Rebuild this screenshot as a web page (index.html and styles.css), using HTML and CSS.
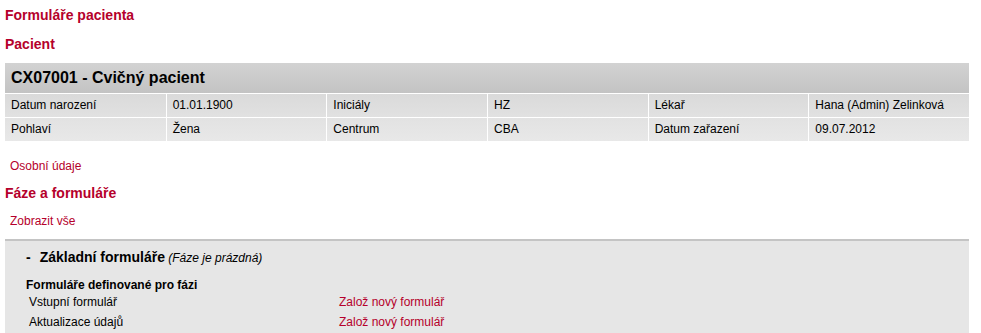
FILE: index.html
```html
<!DOCTYPE html>
<html lang="cs">
<head>
<meta charset="utf-8">
<title>Formuláře pacienta</title>
<link rel="stylesheet" href="styles.css">
</head>
<body>
<div class="page">
  <h1 class="heading h-top">Formuláře pacienta</h1>
  <h2 class="heading h-patient">Pacient</h2>
  <div class="patient">
    <div class="patient-title">CX07001 - Cvičný pacient</div>
    <div class="patient-row row-a">
      <div class="cell">Datum narození</div>
      <div class="cell">01.01.1900</div>
      <div class="cell">Iniciály</div>
      <div class="cell">HZ</div>
      <div class="cell">Lékař</div>
      <div class="cell">Hana (Admin) Zelinková</div>
    </div>
    <div class="patient-row row-b">
      <div class="cell">Pohlaví</div>
      <div class="cell">Žena</div>
      <div class="cell">Centrum</div>
      <div class="cell">CBA</div>
      <div class="cell">Datum zařazení</div>
      <div class="cell">09.07.2012</div>
    </div>
  </div>
  <a class="link link-personal" href="#">Osobní údaje</a>
  <h2 class="heading h-phases">Fáze a formuláře</h2>
  <a class="link link-all" href="#">Zobrazit vše</a>
  <div class="phase">
    <div class="phase-title"><span class="dash">-</span><b>Základní formuláře</b> <i>(Fáze je prázdná)</i></div>
    <div class="phase-sub">Formuláře definované pro fázi</div>
    <div class="form-row"><span class="form-name">Vstupní formulář</span><a class="link" href="#">Založ nový formulář</a></div>
    <div class="form-row"><span class="form-name">Aktualizace údajů</span><a class="link" href="#">Založ nový formulář</a></div>
  </div>
</div>
</body>
</html>
```

FILE: styles.css
```css
html, body {
  margin: 0;
  padding: 0;
  background: #ffffff;
}
body {
  font-family: "Liberation Sans", Arial, sans-serif;
  font-size: 12px;
  color: #000000;
}
.page {
  padding: 0 12px 0 5px;
  display: flex;
  flex-direction: column;
  align-items: flex-start;
}
.heading {
  margin: 0;
  color: #b5002b;
  font-size: 14px;
  font-weight: bold;
  line-height: 16px;
}
.h-top {
  margin-top: 7px;
}
.h-patient {
  margin-top: 13px;
}
.patient {
  margin-top: 11px;
  width: 964px;
  align-self: stretch;
}
.patient-title {
  height: 30px;
  line-height: 30px;
  padding-left: 6px;
  font-size: 16px;
  font-weight: bold;
  background: linear-gradient(#d2d2d2, #c3c3c3);
  border-bottom: 1px solid #ffffff;
}
.patient-row {
  display: grid;
  grid-template-columns: repeat(6, 1fr);
  height: 23px;
  line-height: 23px;
}
.row-a {
  background: linear-gradient(#dadada, #e1e1e1);
  border-bottom: 1px solid #ffffff;
}
.row-b {
  background: linear-gradient(#e2e2e2, #e8e8e8);
}
.cell {
  padding-left: 6px;
  border-left: 1px solid #ffffff;
}
.cell:first-child {
  border-left: none;
}
.link {
  color: #b5002b;
  text-decoration: none;
}
.link-personal {
  margin: 18px 0 0 5px;
  line-height: 14px;
}
.h-phases {
  margin-top: 12px;
}
.link-all {
  margin: 13px 0 0 5px;
  line-height: 14px;
}
.phase {
  margin-top: 11px;
  width: 964px;
  box-sizing: border-box;
  background: #e6e6e6;
  border-top: 2px solid #c4c4c4;
  padding: 7px 0 4px 21px;
}
.phase-title {
  line-height: 18px;
}
.phase-title b {
  font-size: 14px;
}
.phase-title i {
  font-size: 12px;
}
.dash {
  font-weight: bold;
  font-size: 14px;
  margin-right: 9px;
}
.phase-sub {
  margin-top: 11px;
  font-weight: bold;
  line-height: 14px;
}
.form-row {
  display: flex;
  line-height: 20px;
  padding-left: 3px;
}
.form-name {
  width: 310px;
}
```
